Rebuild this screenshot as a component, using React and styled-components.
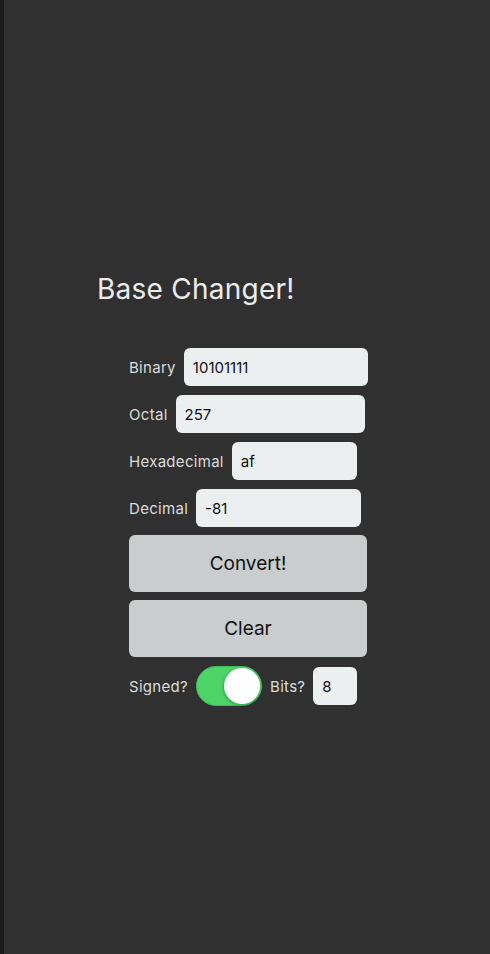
import React, { useState } from "react";
import styled, { createGlobalStyle } from "styled-components";

const Global = createGlobalStyle`
  html, body { margin: 0; padding: 0; background: #303030; }
  body { font-family: Inter, "Noto Sans", sans-serif; }
  * { box-sizing: border-box; }
`;

const Page = styled.div`
  min-height: 954px;
  background: #303030;
  border-left: 4px solid #1b1b1b;
  padding: 270px 0 0 93px;
  display: flex;
  flex-direction: column;
`;

const Title = styled.h1`
  margin: 0;
  font-size: 28px;
  line-height: 38px;
  font-weight: 400;
  color: #ececec;
  letter-spacing: 0.25px;
`;

const Form = styled.div`
  margin: 40px 0 0 32px;
  width: 238px;
  display: flex;
  flex-direction: column;
  gap: 9px;
`;

const Row = styled.div`
  display: flex;
  align-items: center;
  gap: 8px;
`;

const Label = styled.span`
  font-size: 15px;
  color: #dcdcdc;
  letter-spacing: 0.3px;
`;

const Field = styled.input`
  width: ${(p) => p.$w}px;
  height: 38px;
  border: none;
  border-radius: 6px;
  background: #ebefef;
  padding: 0 9px;
  font-family: inherit;
  font-size: 15px;
  color: #111;
  outline: none;
`;

const Button = styled.button`
  width: 238px;
  height: 57px;
  margin-top: -1px;
  border: none;
  border-radius: 6px;
  background: #c9cdcd;
  color: #111;
  font-family: inherit;
  font-size: 19px;
  cursor: pointer;
`;

const SwitchTrack = styled.div`
  width: 66px;
  height: 40px;
  border-radius: 20px;
  background: #4cd467;
  border: 1px solid #3fbd58;
  position: relative;
  cursor: pointer;
`;

const Thumb = styled.div`
  position: absolute;
  top: 1px;
  right: 1px;
  width: 36px;
  height: 36px;
  border-radius: 50%;
  background: #fff;
  box-shadow: -1px 1px 3px rgba(0, 0, 0, 0.25);
`;

export default function App() {
  const [v, setV] = useState({ b: "10101111", o: "257", h: "af", d: "-81", bits: "8" });
  const set = (k) => (e) => setV({ ...v, [k]: e.target.value });
  return (
    <>
      <Global />
      <Page>
        <Title>Base Changer!</Title>
        <Form>
          <Row>
            <Label>Binary</Label>
            <Field $w={184} value={v.b} onChange={set("b")} />
          </Row>
          <Row>
            <Label>Octal</Label>
            <Field $w={189} value={v.o} onChange={set("o")} />
          </Row>
          <Row>
            <Label>Hexadecimal</Label>
            <Field $w={125} value={v.h} onChange={set("h")} />
          </Row>
          <Row>
            <Label>Decimal</Label>
            <Field $w={165} value={v.d} onChange={set("d")} />
          </Row>
          <Button>Convert!</Button>
          <Button>Clear</Button>
          <Row>
            <Label>Signed?</Label>
            <SwitchTrack>
              <Thumb />
            </SwitchTrack>
            <Label>Bits?</Label>
            <Field $w={44} value={v.bits} onChange={set("bits")} />
          </Row>
        </Form>
      </Page>
    </>
  );
}
